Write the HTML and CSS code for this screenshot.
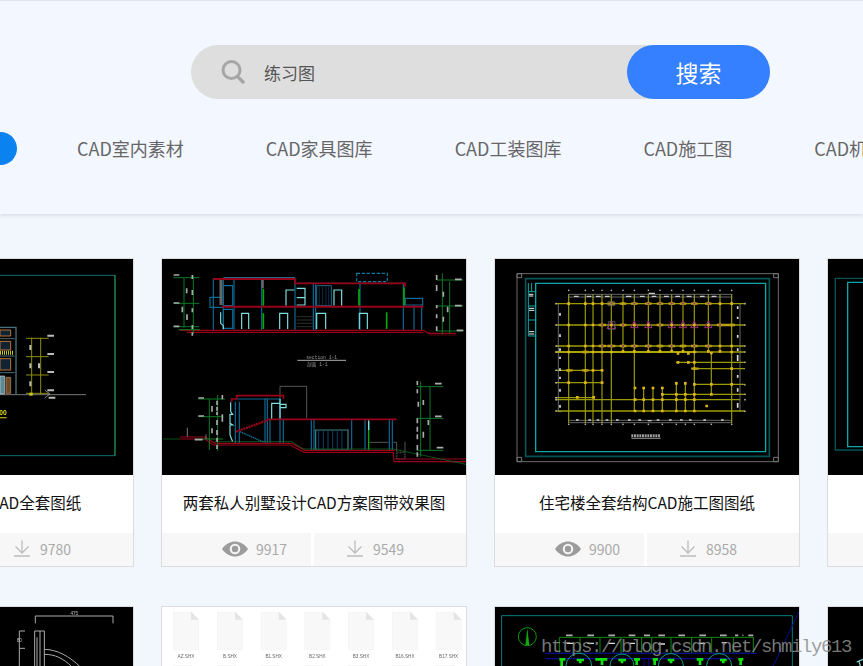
FILE: index.html
```html
<!DOCTYPE html>
<html lang="zh-CN">
<head>
<meta charset="utf-8">
<title>CAD图库</title>
<link rel="stylesheet" href="styles.css">
</head>
<body>
<svg class="defs" width="0" height="0" aria-hidden="true">
  <defs>
    <symbol id="i-eye" viewBox="0 0 26 16"><path d="M0 8C4 2.500 8.500 .5 13 .5S22 2.500 26 8C22 13.500 17.500 15.500 13 15.500S4 13.500 0 8Z" fill="#9c9c9c"/><circle cx="13" cy="8" r="5.300" fill="#f4f4f4"/><circle cx="13" cy="8" r="3.200" fill="#9c9c9c"/></symbol>
    <symbol id="i-down" viewBox="0 0 16 17"><path d="M8 .5V12.500M1.500 6.500L8 13L14.500 6.500M0 16H16" fill="none" stroke="#bdbdbd" stroke-width="1.300"/></symbol>
    <symbol id="i-file" viewBox="0 0 78 116"><path d="M.5.500H54L77.500 24V115.500H.5Z" fill="#f8f8f8" stroke="#e8e8e8"/><path d="M54 .5V24H77.500Z" fill="#e4e4e4"/></symbol>
  </defs>
</svg>

<header class="top">
  <form class="search">
    <svg class="search-icon" viewBox="0 0 24 24"><circle cx="10.500" cy="10" r="8.500" fill="none" stroke="#a6a6a6" stroke-width="3"/><path d="M16.500 16.500L22 22" stroke="#a6a6a6" stroke-width="3.400" stroke-linecap="round"/></svg>
    <span class="search-text">练习图</span>
    <button class="search-btn" type="button">搜索</button>
  </form>
  <nav class="nav">
    <a class="nav-pill">全部</a>
    <a class="nav-item">CAD室内素材</a>
    <a class="nav-item">CAD家具图库</a>
    <a class="nav-item">CAD工装图库</a>
    <a class="nav-item">CAD施工图</a>
    <a class="nav-item">CAD机械图库</a>
  </nav>
</header>

<main class="list">
  <div class="row">
    <article class="card">
      <svg class="pic" viewBox="-513 27 912 648">
        <path d="M-100 76H345M-100 617H345" stroke="#0a6f6f" stroke-width="3" fill="none"/>
        <path d="M345 76V617" stroke="#2aa86c" stroke-width="3.500"/>
        <path d="M0 434H258" stroke="#777" stroke-width="3"/>
        <path d="M-60 232H48V434" stroke="#47707a" stroke-width="4" fill="none"/>
        <path d="M0 240H32V258H0ZM0 274H32V300H0ZM0 326H32V360H0Z" fill="#123" stroke="#b5753c" stroke-width="3"/>
        <path d="M0 266H44M0 318H44M0 368H44" stroke="#47707a" stroke-width="3"/>
        <path d="M0 308H42" stroke="#c8c820" stroke-width="12" stroke-dasharray="3 3"/>
        <path d="M0 378H14V432H0Z" fill="#5a8a9a" stroke="#ccc" stroke-width="2"/>
        <path d="M18 382H32V430H18Z" fill="#6b4a2c" stroke="#c49060" stroke-width="2"/>
        <path d="M95 263V434M122 263V434M78 265H146M78 320H146M78 375H146M78 430H146" stroke="#8c8c00" stroke-width="3" fill="none"/>
        <path d="M142 257H162M142 312H162M142 366H162M142 421H162M146 443H166M91 285V300M91 340V355M91 394V409M117 340V355" stroke="#bbb" stroke-width="6" fill="none"/>
        <path d="M134 420L150 432L134 444" stroke="#bbb" stroke-width="2" fill="none"/>
        <path d="M88 428H98V437H88Z" fill="#c8c820"/>
        <text x="-2" y="496" class="t-yellow">00</text>
        <path d="M-60 503H20" stroke="#aaa000" stroke-width="4"/>
      </svg>
      <h3 class="title">四层别墅建筑图CAD全套图纸</h3>
      <div class="stats">
        <div class="stat stat-view"></div>
        <div class="stat stat-down"><svg class="ic-down"><use href="#i-down"/></svg><span class="num">9780</span></div>
      </div>
    </article>

    <article class="card">
      <svg class="pic" viewBox="6 12 912 648">
        <g fill="none">
          <!-- upper section -->
          <path d="M150 127H190V157H150ZM190 92H218V152H190ZM190 163H218V220H190ZM736 130H788V150H736Z" stroke="#0c6a96" stroke-width="3.500"/>
          <path d="M590 55H682V80H590Z" stroke="#0c7aa0" stroke-width="3.500" stroke-dasharray="10 5"/>
          <path d="M160 70V225M190 70V225M222 70V225M305 70V225M405 70V225M460 85V225M467 85V225M600 85V225M730 85V225M762 150V225M785 150V225" stroke="#0c6a96" stroke-width="3.500"/>
          <path d="M190 68H405M410 85H735" stroke="#2a7f9a" stroke-width="3"/>
          <path d="M470 92H514V152H470Z" stroke="#1b6f8a" stroke-width="3"/>
          <path d="M478 95V150M488 95V150M498 95V150M506 95V150" stroke="#0b3f66" stroke-width="2"/>
          <path d="M410 185H462M410 195H462M410 205H462M410 215H462" stroke="#444" stroke-width="2"/>
          <path d="M183 72V150" stroke="#666" stroke-width="9"/>
          <path d="M308 75V100" stroke="#666" stroke-width="7"/>
          <path d="M310 102V152M310 175V222M597 102V152M680 172V222M732 97V152" stroke="#0aa80a" stroke-width="5"/>
          <path d="M245 222V175H266V222M359 222V175H383V222M470 222V175H497V222M598 222V175H622V222M378 152V105H403M410 100H435V150H410M410 128H435M522 152V105H545V152M182 172V205L190 212V222" stroke="#7ee0e0" stroke-width="3.500"/>
          <path d="M160 72H405V85H735V95" stroke="#98001a" stroke-width="5.500"/>
          <path d="M185 155H790" stroke="#98001a" stroke-width="6"/>
          <path d="M60 226H790L806 235H888M80 232H790" stroke="#98001a" stroke-width="3.500"/>
          <path d="M806 240H890" stroke="#8c0018" stroke-width="2"/>
          <path d="M40 68H118M40 145H118M40 215H118M72 70V218M100 62V236M55 224H120" stroke="#0a7a24" stroke-width="3"/>
          <path d="M830 75H910M830 153H910M830 228H910M869 80V236M847 55V238" stroke="#0a7a24" stroke-width="3"/>
          <path d="M41 60H58M41 144H58M41 214H58M885 73H905M885 152H905M890 226H910M97 60V72M97 105V120M97 160V172M97 210V222M80 100V115M67 155V172M81 178V195M97 232V242M830 60V75M830 90V108M850 110V125M830 150V160M830 178V190M863 155V172M850 185V200M830 214V228" stroke="#aaa" stroke-width="5"/>
          <!-- label -->
          <path d="M412 316H558" stroke="#aaa" stroke-width="3"/>
          <!-- lower section -->
          <path d="M360 495V394H440V490" stroke="#555" stroke-width="3"/>
          <path d="M228 432H360M226 440V565M238 440V565M315 430V565M322 430V565M330 495V565M360 430V565M370 495V565M454 495V585M462 495V585M575 495V585M615 495V585M688 495V585M697 495V585" stroke="#0c6a96" stroke-width="3.500"/>
          <path d="M467 525H564V585H467Z" stroke="#37858a" stroke-width="3.500"/>
          <path d="M476 528V582M490 528V582M504 528V582M518 528V582M532 528V582M546 528V582" stroke="#0b3f66" stroke-width="3"/>
          <path d="M240 530L312 562" stroke="#0c7aa0" stroke-width="4" stroke-dasharray="4 2"/>
          <path d="M212 442V470L218 478H210V505L218 510H210V540L218 560M335 492V445H360M360 432V492M362 448H378V458H362" stroke="#7ee0e0" stroke-width="3.500"/>
          <path d="M626 500V585" stroke="#0aa80a" stroke-width="4"/>
          <path d="M626 496V525" stroke="#7ee0e0" stroke-width="4"/>
          <path d="M628 562H685M700 562H710V590M735 560V590" stroke="#555" stroke-width="3"/>
          <path d="M710 592H735V612H710Z" stroke="#444" stroke-width="5" stroke-dasharray="3 2"/>
          <path d="M215 440V432H230V422H370V432" stroke="#98001a" stroke-width="5"/>
          <path d="M322 493H710" stroke="#98001a" stroke-width="5"/>
          <path d="M228 530L325 495" stroke="#98001a" stroke-width="7" stroke-dasharray="6 2"/>
          <path d="M60 546H135L165 565H395L435 586H705M60 552H135L160 570H390L432 592H700L702 620H918M705 612H918" stroke="#98001a" stroke-width="3.500"/>
          <path d="M10 552H60M165 560H395L430 582H700L918 628" stroke="#0a7a24" stroke-width="2"/>
          <path d="M115 432H195M115 485H190M105 552H190M148 432V585M173 420V588" stroke="#0a7a24" stroke-width="3"/>
          <path d="M115 429H132M115 483H132M104 554H128M187 420V433M171 437V450M156 453V470M171 455V467M187 478V500M156 520V535M171 470V480M171 495V510M171 525V540M171 548V560M171 570V582" stroke="#aaa" stroke-width="5"/>
          <path d="M82 518V545M138 538V552" stroke="#777" stroke-width="3"/>
          <path d="M770 395H850M770 490H850M770 586H850M782 380V605M810 395V586" stroke="#0a7a24" stroke-width="3"/>
          <path d="M825 386H845M825 484H845M830 578H850M772 378V390M772 403V415M775 440V455M790 435V450M772 490V505M772 515V530M790 530V548M772 538V553M772 570V585M772 592V605M805 495V510" stroke="#aaa" stroke-width="5"/>
        </g>
        <text x="485" y="311" class="t-draw" text-anchor="middle">section 1-1</text>
        <text x="472" y="332" class="t-draw" text-anchor="middle">剖面 1-1</text>
      </svg>
      <h3 class="title">两套私人别墅设计CAD方案图带效果图</h3>
      <div class="stats">
        <div class="stat stat-view"><svg class="ic-eye"><use href="#i-eye"/></svg><span class="num">9917</span></div>
        <div class="stat stat-down"><svg class="ic-down"><use href="#i-down"/></svg><span class="num">9549</span></div>
      </div>
    </article>

    <article class="card">
      <svg class="pic" viewBox="15 12 912 648">
        <g fill="none">
          <path d="M81 56H865V620H81Z" stroke="#6a6a6a" stroke-width="3"/>
          <path d="M81 56H95V68H81ZM851 56H865V68H851ZM81 607H95V620H81ZM851 607H865V620H851Z" stroke="#777" stroke-width="3"/>
          <path d="M107 71H838V604H107Z" stroke="#055" stroke-width="5"/>
          <path d="M137 85H827V590H137Z" stroke="#0aa8a8" stroke-width="4"/>
          <path d="M115 84V243H135M115 110H135M115 153H135M115 195H135M125 84V110" stroke="#0aa8a8" stroke-width="3"/>
          <path d="M117 118H130M117 123H130M117 160H133M117 166H133M117 230H133M117 237H133" stroke="#eee" stroke-width="3"/>
          <path d="M236 118V505M286 118V505M309 118V505M336 118V505M364 118V505M399 118V292M433 118V468M475 118V292M510 118V292M545 118V292M579 118V292M613 118V470M655 118V292M690 118V292M725 118V505M664 292V420M461 395V468M489 395V468M517 395V468M559 380V468M586 380V468" stroke="#9a9a00" stroke-width="3.500"/>
          <path d="M197 146H765M197 210H765M197 273H765M197 291H765M197 346H340M197 383H340M197 428H315M197 434H750M197 468H765M558 322H765M605 341H765M613 388H765M513 418H765" stroke="#9a9a00" stroke-width="4"/>
          <path d="M197 291H620" stroke="#a8a800" stroke-width="6"/>
          <path d="M205 146V470H215M750 146V470M235 118H727M235 126H727M238 496H725M238 503H725" stroke="#999" stroke-width="2"/>
          <path d="M236 146h.1M286 146h.1M309 146h.1M336 146h.1M364 146h.1M399 146h.1M433 146h.1M475 146h.1M510 146h.1M545 146h.1M579 146h.1M613 146h.1M655 146h.1M690 146h.1M725 146h.1M236 210h.1M286 210h.1M309 210h.1M336 210h.1M364 210h.1M399 210h.1M433 210h.1M475 210h.1M510 210h.1M545 210h.1M579 210h.1M613 210h.1M655 210h.1M690 210h.1M725 210h.1M236 273h.1M286 273h.1M309 273h.1M336 273h.1M364 273h.1M399 273h.1M433 273h.1M475 273h.1M510 273h.1M545 273h.1M579 273h.1M613 273h.1M655 273h.1M690 273h.1M725 273h.1M236 291h.1M286 291h.1M309 291h.1M336 291h.1M364 291h.1M399 289h.1M433 289h.1M475 289h.1M510 289h.1M545 288h.1M564 295h.1M579 289h.1M595 295h.1M613 291h.1M655 289h.1M664 294h.1M690 289h.1M725 291h.1M564 322h.1M595 322h.1M613 322h.1M236 346h.1M286 346h.1M309 346h.1M336 346h.1M613 341h.1M725 341h.1M236 383h.1M286 383h.1M336 383h.1M559 385h.1M586 385h.1M613 388h.1M664 388h.1M725 388h.1M435 399h.1M461 399h.1M489 399h.1M517 399h.1M517 418h.1M559 418h.1M586 418h.1M613 418h.1M664 418h.1M262 427h.1M311 427h.1M435 434h.1M461 434h.1M489 434h.1M517 434h.1M559 434h.1M586 434h.1M613 434h.1M650 453h.1M435 468h.1M461 468h.1M489 468h.1M517 468h.1M559 468h.1M586 468h.1M613 468h.1" stroke="#e0b418" stroke-width="8" stroke-linecap="square"/>
          <path d="M352 146H376M389 146H409M423 146H443M465 146H485M500 146H520M535 146H555M569 146H589M603 146H623M645 146H665M326 210H348M389 210H409M500 210H520M680 210H735M326 273H348M352 273H376M389 273H409M423 273H443M465 273H485M500 273H520M535 273H555M569 273H589M603 273H623M645 273H665M228 346H248M276 346H296M604 341H626M276 291H296" stroke="#b8a010" stroke-width="7"/>
          <path d="M364 146h.1M433 146h.1M475 146h.1M510 146h.1M545 146h.1M579 146h.1M613 146h.1M655 146h.1M337 210h.1M399 210h.1M510 210h.1M690 210h.1M337 273h.1M364 273h.1M399 273h.1M433 273h.1M475 273h.1M545 273h.1M613 273h.1M655 273h.1" stroke="#9a2090" stroke-width="5" stroke-linecap="square"/>
          <path d="M364 198L377 220H351ZM433 198L444 218H422ZM475 198L486 218H464ZM545 198L556 218H534ZM579 198L590 218H568ZM613 198L624 218H602ZM655 198L666 218H644Z" stroke="#a02a80" stroke-width="3"/>
          <path d="M354 140H374V152H354ZM355 200H375V223H355Z" stroke="#777" stroke-width="2"/>
          <path d="M252 124H266M290 124H304M318 124H332M345 124H359M408 124H424M450 124H464M485 124H499M522 124H536M556 124H570M590 124H604M630 124H644M665 124H679M476 115H495M258 495H266M295 495H303M320 495H328M347 495H355M378 495H386M414 495H422M445 495H453M473 497H485M500 495H508M537 495H545M570 495H578M597 495H605M640 495H648M693 495H701" stroke="#ccc" stroke-width="4"/>
          <path d="M198 146h.1M198 210h.1M198 273h.1M198 291h.1M198 346h.1M198 383h.1M198 428h.1M198 434h.1M198 468h.1M765 146h.1M765 210h.1M765 273h.1M765 291h.1M765 322h.1M765 390h.1M765 418h.1M765 434h.1M765 469h.1M236 106h.1M286 106h.1M309 106h.1M336 106h.1M364 106h.1M399 106h.1M433 106h.1M475 106h.1M510 106h.1M545 106h.1M579 106h.1M613 106h.1M655 106h.1M690 106h.1M725 106h.1M236 508h.1M286 508h.1M309 508h.1M336 508h.1M364 508h.1M399 508h.1M433 508h.1M475 508h.1M517 508h.1M559 508h.1M586 508h.1M613 508h.1M664 508h.1M725 508h.1" stroke="#bbb" stroke-width="5" stroke-linecap="round"/>
          <path d="M210 174V182M210 238V246M210 280V288M210 305V312M210 340V348M210 365V372M210 402V410M210 450V458M743 154V162M743 185V192M743 240V248M743 280V288M743 300V318M743 360V368M743 400V410M743 444V458" stroke="#ddd" stroke-width="5"/>
          <path d="M424 542H510" stroke="#999" stroke-width="9" stroke-dasharray="6 2"/>
          <path d="M424 550H512" stroke="#ddd" stroke-width="2"/>
        </g>
      </svg>
      <h3 class="title">住宅楼全套结构CAD施工图图纸</h3>
      <div class="stats">
        <div class="stat stat-view"><svg class="ic-eye"><use href="#i-eye"/></svg><span class="num">9900</span></div>
        <div class="stat stat-down"><svg class="ic-down"><use href="#i-down"/></svg><span class="num">8958</span></div>
      </div>
    </article>

    <article class="card">
      <svg class="pic" viewBox="1014 12 912 648">
        <path d="M1036 70H1900V585H1036Z" fill="none" stroke="#055" stroke-width="4"/>
        <path d="M1073 82H1900V575H1073Z" fill="none" stroke="#0aa8a8" stroke-width="4"/>
      </svg>
      <h3 class="title"></h3>
      <div class="stats">
        <div class="stat stat-view"></div>
      </div>
    </article>
  </div>

  <div class="row">
    <article class="card">
      <svg class="pic" viewBox="-513 21 912 648">
        <g fill="none" stroke="#aaa" stroke-width="3">
          <path d="M106 70V48H339V70"/>
          <path d="M75 93H58V240M58 145H75"/>
          <path d="M104 93H133V240M104 93V240M120 93V240M111 112V240"/>
          <path d="M133 148C170 148 210 170 240 200"/>
          <path d="M133 163C165 163 190 175 215 200"/>
        </g>
        <text x="223" y="46" class="t-dim" text-anchor="middle">475</text>
        <text x="50" y="125" class="t-dim">80</text>
      </svg>
    </article>

    <article class="card">
      <svg class="pic pic-white" viewBox="6 21 912 648">
        <use href="#i-file" x="39" y="35" width="78" height="116"/>
        <use href="#i-file" x="171" y="35" width="78" height="116"/>
        <use href="#i-file" x="302" y="35" width="78" height="116"/>
        <use href="#i-file" x="433" y="35" width="78" height="116"/>
        <use href="#i-file" x="564" y="35" width="78" height="116"/>
        <use href="#i-file" x="696" y="35" width="78" height="116"/>
        <use href="#i-file" x="827" y="35" width="78" height="116"/>
        <g class="t-file" text-anchor="middle">
          <text x="78" y="173">AZ.SHX</text>
          <text x="210" y="173">B.SHX</text>
          <text x="341" y="173">B1.SHX</text>
          <text x="472" y="173">B2.SHX</text>
          <text x="603" y="173">B3.SHX</text>
          <text x="735" y="173">B16.SHX</text>
          <text x="866" y="173">B17.SHX</text>
        </g>
        <use href="#i-file" x="39" y="195" width="78" height="116"/>
        <use href="#i-file" x="171" y="195" width="78" height="116"/>
        <use href="#i-file" x="302" y="195" width="78" height="116"/>
        <use href="#i-file" x="433" y="195" width="78" height="116"/>
        <use href="#i-file" x="564" y="195" width="78" height="116"/>
        <use href="#i-file" x="696" y="195" width="78" height="116"/>
        <use href="#i-file" x="827" y="195" width="78" height="116"/>
      </svg>
    </article>

    <article class="card">
      <svg class="pic" viewBox="15 21 912 648">
        <g fill="none">
          <path d="M35 47H907V300M35 47V300" stroke="#0a7a7a" stroke-width="3"/>
          <path d="M927 35L850 198" stroke="#0a0a90" stroke-width="3"/>
          <circle cx="112" cy="110" r="27" stroke="#0a9a0a" stroke-width="3"/>
          <path d="M112 84L106 136H118Z" fill="#0aa80a"/>
          <path d="M208 112H790M208 160H790M208 112V160M270 112V160M330 112V160M393 112V160M455 112V160M485 112V160M543 112V160M605 112V160M665 112V160M730 112V160M790 112V160" stroke="#0a8a0a" stroke-width="3"/>
          <path d="M165 160H800M165 176H730" stroke="#0a0a90" stroke-width="3.500"/>
          <path d="M228 106H248M292 106H312M355 106H375M416 106H436M462 106H480M505 106H525M565 106H585M628 106H648M690 106H710M735 106H745M757 106H760M775 106H790" stroke="#aaa" stroke-width="5"/>
          <path d="M230 130H250M292 130H312M355 130H375M420 130H435M505 132H525M625 130H645M695 128H710" stroke="#ddd" stroke-width="4"/>
          <path d="M228 198A36 36 0 0 1 305 198M360 198A36 36 0 0 1 432 198M505 198A36 36 0 0 1 580 198M650 198A36 36 0 0 1 725 198" stroke="#0a9a8a" stroke-width="3"/>
          <path d="M208 178H226M215 178V198M260 180H282M271 180V190M316 178H352M336 178V195M385 180H408M396 180V190M432 178H450M440 178V195M488 178H504M494 178V195M533 180H553M543 180V190M620 178H640M630 178V195M690 180H710M700 180V190M745 178H760M752 178V195" stroke="#11e011" stroke-width="8"/>
          <path d="M462 176V210M476 176V210" stroke="#0a0a90" stroke-width="3"/>
        </g>
      </svg>
    </article>

    <article class="card">
      <svg class="pic" viewBox="444 21 912 648">
        <path d="M530 186L549 178M537 184L541 198" stroke="#7ecfcf" stroke-width="4" fill="none"/>
      </svg>
    </article>
  </div>
</main>

<div class="watermark">https://blog.csdn.net/shmily613</div>
</body>
</html>
```

FILE: styles.css
```css
html, body {
  margin: 0;
  padding: 0;
}

body {
  width: 863px;
  height: 666px;
  overflow: hidden;
  position: relative;
  background: #f2f6fd;
  font-family: "Noto Sans CJK SC", "Noto Sans", sans-serif;
}

.defs {
  position: absolute;
}

.top {
  box-sizing: border-box;
  height: 214px;
  border-top: 1px solid #dfe3ee;
  padding-top: 44px;
  background: #f3f7ff;
  box-shadow: 0 1px 4px rgba(90, 100, 130, .22);
}

.search {
  display: flex;
  align-items: center;
  width: 579px;
  height: 54px;
  margin: 0 0 0 191px;
  border-radius: 27px;
  background: #dedede;
}

.search-icon {
  width: 24px;
  height: 24px;
  margin-left: 30px;
}

.search-text {
  flex: 1;
  margin-left: 19px;
  font-size: 17px;
  color: #555;
}

.search-btn {
  width: 143px;
  height: 54px;
  padding: 0;
  border: 0;
  border-radius: 27px;
  background: #3580ff;
  color: #fff;
  font: 23px "Noto Sans CJK SC", sans-serif;
}

.nav {
  display: flex;
  align-items: center;
  gap: 82px;
  height: 33px;
  margin: 33px 0 0 -83px;
  white-space: nowrap;
}

.nav-pill {
  flex: none;
  width: 100px;
  height: 33px;
  margin-right: -22px;
  border-radius: 17px;
  background: #0a82f0;
  color: #fff;
  line-height: 33px;
  text-align: center;
  font-size: 16px;
}

.nav-item {
  flex: none;
  margin-top: -1px;
  font-size: 18px;
  color: #666;
}

.list {
  display: flex;
  flex-direction: column;
  gap: 39px;
  margin: 44px 0 0 -172px;
}

.row {
  display: flex;
  gap: 27px;
}

.card {
  box-sizing: border-box;
  flex: none;
  display: flex;
  flex-direction: column;
  width: 306px;
  height: 309px;
  border: 1px solid #dcdcdc;
  background: #fff;
}

.pic {
  flex: none;
  display: block;
  width: 304px;
  height: 216px;
  background: #000;
  filter: blur(.4px);
}

.pic-white {
  background: #fff;
}

.title {
  flex: none;
  height: 58px;
  margin: 0;
  overflow: hidden;
  font-size: 15.500px;
  font-weight: 400;
  line-height: 54px;
  text-align: center;
  white-space: nowrap;
  color: #111;
}

.stats {
  flex: none;
  display: flex;
  justify-content: space-between;
  height: 33px;
}

.stat {
  box-sizing: border-box;
  display: flex;
  align-items: center;
  padding-bottom: 2px;
  background: #f7f7f7;
}

.stat-view {
  width: 149px;
  padding-left: 60px;
}

.stat-down {
  width: 152px;
  padding-left: 33px;
}

.ic-eye {
  width: 26px;
  height: 16px;
  margin-right: 8px;
}

.ic-down {
  width: 16px;
  height: 17px;
  margin-right: 10px;
}

.num {
  font-size: 14px;
  color: #aaa;
}

.t-draw {
  font: 14px "Liberation Mono", "Noto Sans CJK SC", monospace;
  fill: #999;
}

.t-yellow {
  font: bold 20px "Liberation Sans", sans-serif;
  fill: #d8d820;
}

.t-dim {
  font: 14px "Liberation Sans", sans-serif;
  fill: #bbb;
}

.t-file {
  font: 14px "Liberation Sans", sans-serif;
  fill: #666;
}

.watermark {
  position: absolute;
  left: 541px;
  top: 636px;
  font: 19px/22px "Liberation Mono", monospace;
  letter-spacing: -1.400px;
  color: rgba(140, 140, 140, .85);
  white-space: nowrap;
}
```
